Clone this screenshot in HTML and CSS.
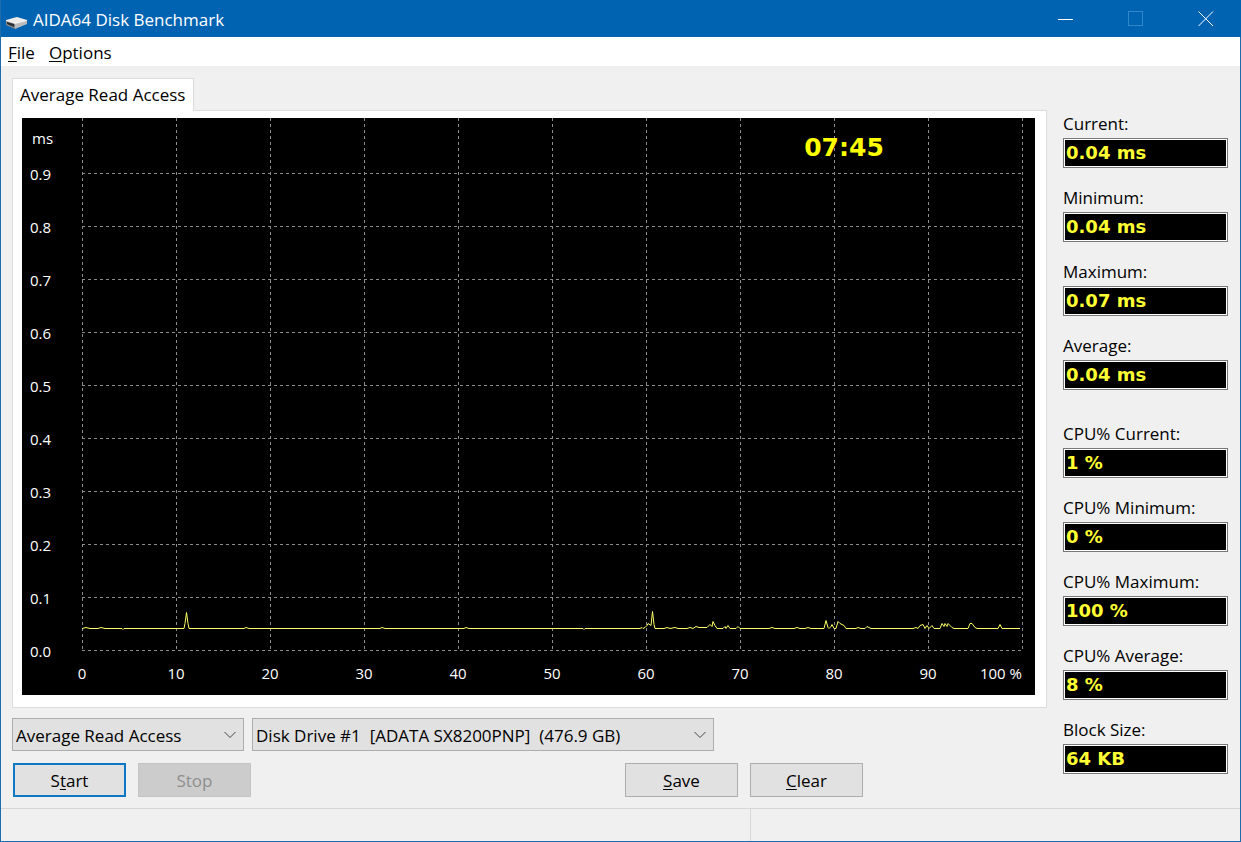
FILE: index.html
```html
<!DOCTYPE html>
<html lang="en">
<head>
    <meta charset="UTF-8">
    <meta name="viewport" content="width=device-width, initial-scale=1.0">
    <title>AIDA64 Disk Benchmark</title>
    <link rel="stylesheet" href="styles.css">
</head>
<body>
<div class="window">

    <header class="titlebar">
        <svg class="app-icon" width="24" height="16" viewBox="0 0 24 16">
            <path d="M1 5 L12 2 L22 5 L22 7 L10 10 L1 7 Z" fill="#efedea"/>
            <path d="M1 6 L10 9 V14 L1 10 Z" fill="#85898c"/>
            <path d="M10 9 L22 6 V9 L10 14 Z" fill="#b9bbbd"/>
            <path d="M2 7 L9 9 V12 L2 9 Z" fill="#292e33"/>
        </svg>
        <h1 class="title">AIDA64 Disk Benchmark</h1>
        <button type="button" class="win-btn" aria-label="Minimize">
            <svg width="16" height="16" viewBox="0 0 16 16"><path d="M0 8.5 H15"/></svg>
        </button>
        <button type="button" class="win-btn" aria-label="Maximize" disabled>
            <svg width="16" height="16" viewBox="0 0 16 16"><rect x="0.5" y="0.5" width="14" height="14"/></svg>
        </button>
        <button type="button" class="win-btn" aria-label="Close">
            <svg width="16" height="16" viewBox="0 0 16 16"><path d="M0.5 0.5 L15 15 M15 0.5 L0.5 15"/></svg>
        </button>
    </header>

    <nav class="menu">
        <a href="#"><u>F</u>ile</a>
        <a href="#"><u>O</u>ptions</a>
    </nav>

    <main class="content">
        <div class="left">
            <button type="button" class="tab">Average Read Access</button>
            <div class="panel">
                <svg class="chart" viewBox="0 0 1013 577">
                    <rect class="chart-bg" width="1013" height="577"/>
                    <g id="grid"></g>
                    <polyline class="trace" points="60,510.5 62,510 64,509.5 68,510.5 76,510.5 79,509.5 83,510.5 100,510.5 101,511.5 102,510.5 162,510.5 163,505.5 164.5,494.5 166,505.5 167,510.5 222,510.5 224,509.5 227,510.5 358,510.5 360,509.5 363,510.5 442,510.5 444,509.5 447,510.5 561,510.5 562,511.5 563,510.5 618,510.5 620,509.5 621,510.5 623,509.5 625,507.5 626,505.5 629,507.5 630.5,493.5 632,506.5 633,510.5 642,510.5 645,509.5 648,510.5 653,509.5 656,510.5 665,510.5 668,509.5 671,510.5 674,508.5 677,509.5 682,509.5 685,509.5 688,506.5 690,508.5 691,503.5 693,507.5 695,510.5 701,510.5 703,508.5 704,510.5 706,507.5 708,510.5 714,510.5 716,508.5 718,510.5 747,510.5 750,509.5 753,510.5 772,510.5 775,509.5 778,510.5 783,510.5 786,509.5 789,510.5 802,510.5 804,502.5 806,509.5 807,510.5 809,508.5 810,506.5 812,510.5 814,510.5 816,503.5 818,505.5 822,507.5 824,510.5 834,510.5 836,509.5 839,510.5 843,510.5 845,508.5 847,509.5 849,510.5 891,510.5 894,509.5 896,510.5 898,507.5 901,506.5 903,510.5 905,507.5 907,510.5 910,507.5 912,510.5 918,510.5 920,505.5 922,508.5 923,505.5 925,508.5 926,505.5 930,509.5 932,510.5 946,510.5 948,505.5 950,505.5 953,509.5 955,510.5 976,510.5 978,506.5 980,510.5 998,510.5"/>
                    <text class="axis" x="10" y="26">ms</text>
                    <text class="clock" x="822" y="38">07:45</text>
                </svg>
            </div>

            <div class="selects">
                <div class="combo combo-test">
                    <select aria-label="Test">
                        <option>Average Read Access</option>
                    </select>
                    <svg class="arrow" width="12" height="8" viewBox="0 0 12 8"><path d="M0.5 1 L6 6.5 L11.5 1"/></svg>
                </div>
                <div class="combo combo-drive">
                    <select aria-label="Drive">
                        <option>Disk Drive #1&nbsp; [ADATA SX8200PNP]&nbsp; (476.9 GB)</option>
                    </select>
                    <svg class="arrow" width="12" height="8" viewBox="0 0 12 8"><path d="M0.5 1 L6 6.5 L11.5 1"/></svg>
                </div>
            </div>

            <div class="buttons">
                <button type="button" class="btn btn-default">S<u>t</u>art</button>
                <button type="button" class="btn" disabled>Stop</button>
                <span class="spacer"></span>
                <button type="button" class="btn"><u>S</u>ave</button>
                <button type="button" class="btn"><u>C</u>lear</button>
            </div>
        </div>

        <aside class="readouts">
            <div class="readout">
                <label for="cur">Current:</label>
                <input type="text" id="cur" value="0.04 ms" readonly>
            </div>
            <div class="readout">
                <label for="min">Minimum:</label>
                <input type="text" id="min" value="0.04 ms" readonly>
            </div>
            <div class="readout">
                <label for="max">Maximum:</label>
                <input type="text" id="max" value="0.07 ms" readonly>
            </div>
            <div class="readout group-end">
                <label for="avg">Average:</label>
                <input type="text" id="avg" value="0.04 ms" readonly>
            </div>
            <div class="readout">
                <label for="cpuCur">CPU% Current:</label>
                <input type="text" id="cpuCur" value="1 %" readonly>
            </div>
            <div class="readout">
                <label for="cpuMin">CPU% Minimum:</label>
                <input type="text" id="cpuMin" value="0 %" readonly>
            </div>
            <div class="readout">
                <label for="cpuMax">CPU% Maximum:</label>
                <input type="text" id="cpuMax" value="100 %" readonly>
            </div>
            <div class="readout">
                <label for="cpuAvg">CPU% Average:</label>
                <input type="text" id="cpuAvg" value="8 %" readonly>
            </div>
            <div class="readout">
                <label for="block">Block Size:</label>
                <input type="text" id="block" value="64 KB" readonly>
            </div>
        </aside>
    </main>

    <footer class="statusbar">
        <div class="status-main"></div>
        <div class="status-side"></div>
    </footer>
</div>

<script src="chart.js"></script>
</body>
</html>
```
FILE: styles.css
```css
* {
    box-sizing: border-box;
}

body {
    margin: 0;
    font-family: "Open Sans", "Noto Sans", sans-serif;
    font-size: 17px;
    line-height: 24px;
    color: #000;
}

button,
select {
    font: inherit;
    color: inherit;
}

.window {
    display: flex;
    flex-direction: column;
    min-height: 100vh;
    background-color: #f0f0f0;
    border: 1px solid #1f6cab;
    border-top: none;
}

/* title bar */
.titlebar {
    display: flex;
    align-items: center;
    height: 37px;
    margin-right: -1px;
    padding-left: 4px;
    background-color: #0063b1;
    color: #fff;
}

.app-icon {
    margin: 8px 4px 0 0;
}

.title {
    flex: 1;
    margin: 0;
    padding-top: 2px;
    font-size: 17px;
    font-weight: normal;
}

.win-btn {
    display: flex;
    align-items: center;
    justify-content: center;
    width: 70px;
    height: 37px;
    padding: 0;
    border: none;
    background: none;
}

.win-btn path,
.win-btn rect {
    fill: none;
    stroke: #fff;
}

.win-btn:disabled rect {
    stroke: #2f86c9;
}

/* menu */
.menu {
    display: flex;
    gap: 14px;
    height: 29px;
    padding: 4px 7px;
    background-color: #fff;
}

.menu a {
    color: #000;
    text-decoration: none;
}

u {
    text-underline-offset: 2px;
}

/* content */
.content {
    display: flex;
    flex: 1;
    gap: 16px;
    padding: 12px 12px 11px 11px;
}

.left {
    flex: 1;
    min-width: 0;
}

.tab {
    display: block;
    position: relative;
    height: 33px;
    margin-bottom: -1px;
    padding: 0 8px 0 7px;
    border: 1px solid #dcdcdc;
    border-bottom: none;
    background-color: #fff;
}

.panel {
    padding: 7px 11px 12px 9px;
    border: 1px solid #dcdcdc;
    background-color: #fff;
}

/* chart */
.chart {
    display: block;
    width: 100%;
    height: auto;
}

.chart-bg {
    fill: #000;
}

.grid-line {
    stroke: #8c8c8c;
    stroke-dasharray: 3 3;
}

.axis {
    fill: #fff;
    font-size: 15px;
}

.middle {
    text-anchor: middle;
}

.end {
    text-anchor: end;
}

.trace {
    fill: none;
    stroke: #ffff66;
}

.clock {
    fill: #ffff00;
    font-family: "DejaVu Sans", sans-serif;
    font-size: 25px;
    font-weight: bold;
    text-anchor: middle;
}

/* controls under the chart */
.selects {
    display: flex;
    gap: 8px;
    margin-top: 10px;
}

.combo {
    position: relative;
}

.combo-test {
    width: 232px;
}

.combo-drive {
    width: 462px;
}

.combo select {
    appearance: none;
    display: block;
    width: 100%;
    height: 33px;
    padding: 2px 3px 0;
    border: 1px solid #adadad;
    border-radius: 0;
    background-color: #e1e1e1;
}

.arrow {
    position: absolute;
    top: 13px;
    right: 8px;
    fill: none;
    stroke: #444;
    pointer-events: none;
}

.buttons {
    display: flex;
    gap: 12px;
    max-width: 851px;
    margin-top: 12px;
    padding-left: 1px;
}

.spacer {
    flex: 1;
}

.btn {
    width: 113px;
    height: 34px;
    padding: 1px 0 0;
    border: 1px solid #adadad;
    background-color: #e1e1e1;
}

.btn-default {
    border: 2px solid #0f78c4;
}

.btn:disabled {
    border-color: #c4c4c4;
    background-color: #cccccc;
    color: #8f8f8f;
}

/* values on the right */
.readouts {
    display: flex;
    flex-direction: column;
    gap: 18px;
    width: 165px;
    padding-top: 34px;
}

.readout label {
    display: block;
    margin-bottom: 2px;
}

.readout input {
    display: block;
    width: 100%;
    height: 30px;
    padding: 0 2px 2px;
    border: 1px solid #777;
    border-radius: 0;
    outline: 1px solid #fff;
    outline-offset: -2px;
    background-color: #000;
    color: #ffff33;
    font-family: "DejaVu Sans", sans-serif;
    font-size: 18px;
    font-weight: bold;
}

.group-end {
    margin-bottom: 14px;
}

/* status bar */
.statusbar {
    display: flex;
    height: 33px;
    border-top: 1px solid #d7d7d7;
}

.status-main {
    flex: 1;
    border-right: 1px solid #d7d7d7;
}

.status-side {
    width: 489px;
}
```
FILE: chart.js
```js
const SVG_NS = 'http://www.w3.org/2000/svg';
const grid = document.getElementById('grid');

const left = 60;
const bottom = 532;
const stepX = 94;
const stepY = 53;

function addLine(x1, y1, x2, y2) {
    const line = document.createElementNS(SVG_NS, 'line');
    line.setAttribute('class', 'grid-line');
    line.setAttribute('x1', x1);
    line.setAttribute('y1', y1);
    line.setAttribute('x2', x2);
    line.setAttribute('y2', y2);
    grid.appendChild(line);
}

function addLabel(x, y, text, anchor) {
    const label = document.createElementNS(SVG_NS, 'text');
    label.setAttribute('class', 'axis ' + anchor);
    label.setAttribute('x', x);
    label.setAttribute('y', y);
    label.textContent = text;
    grid.appendChild(label);
}

// vertical lines, 0 - 100 %
for (let i = 0; i <= 10; i++) {
    const x = left + i * stepX;
    addLine(x + 0.5, 0, x + 0.5, bottom);
    if (i < 10) {
        addLabel(x, 561, i * 10, 'middle');
    } else {
        addLabel(x, 561, '100 %', 'end');
    }
}

// horizontal lines, 0.0 - 0.9 ms
for (let i = 0; i <= 9; i++) {
    const y = bottom - i * stepY;
    addLine(left, y + 0.5, left + 10 * stepX, y + 0.5);
    addLabel(8, y + 7, (i / 10).toFixed(1), '');
}
```
